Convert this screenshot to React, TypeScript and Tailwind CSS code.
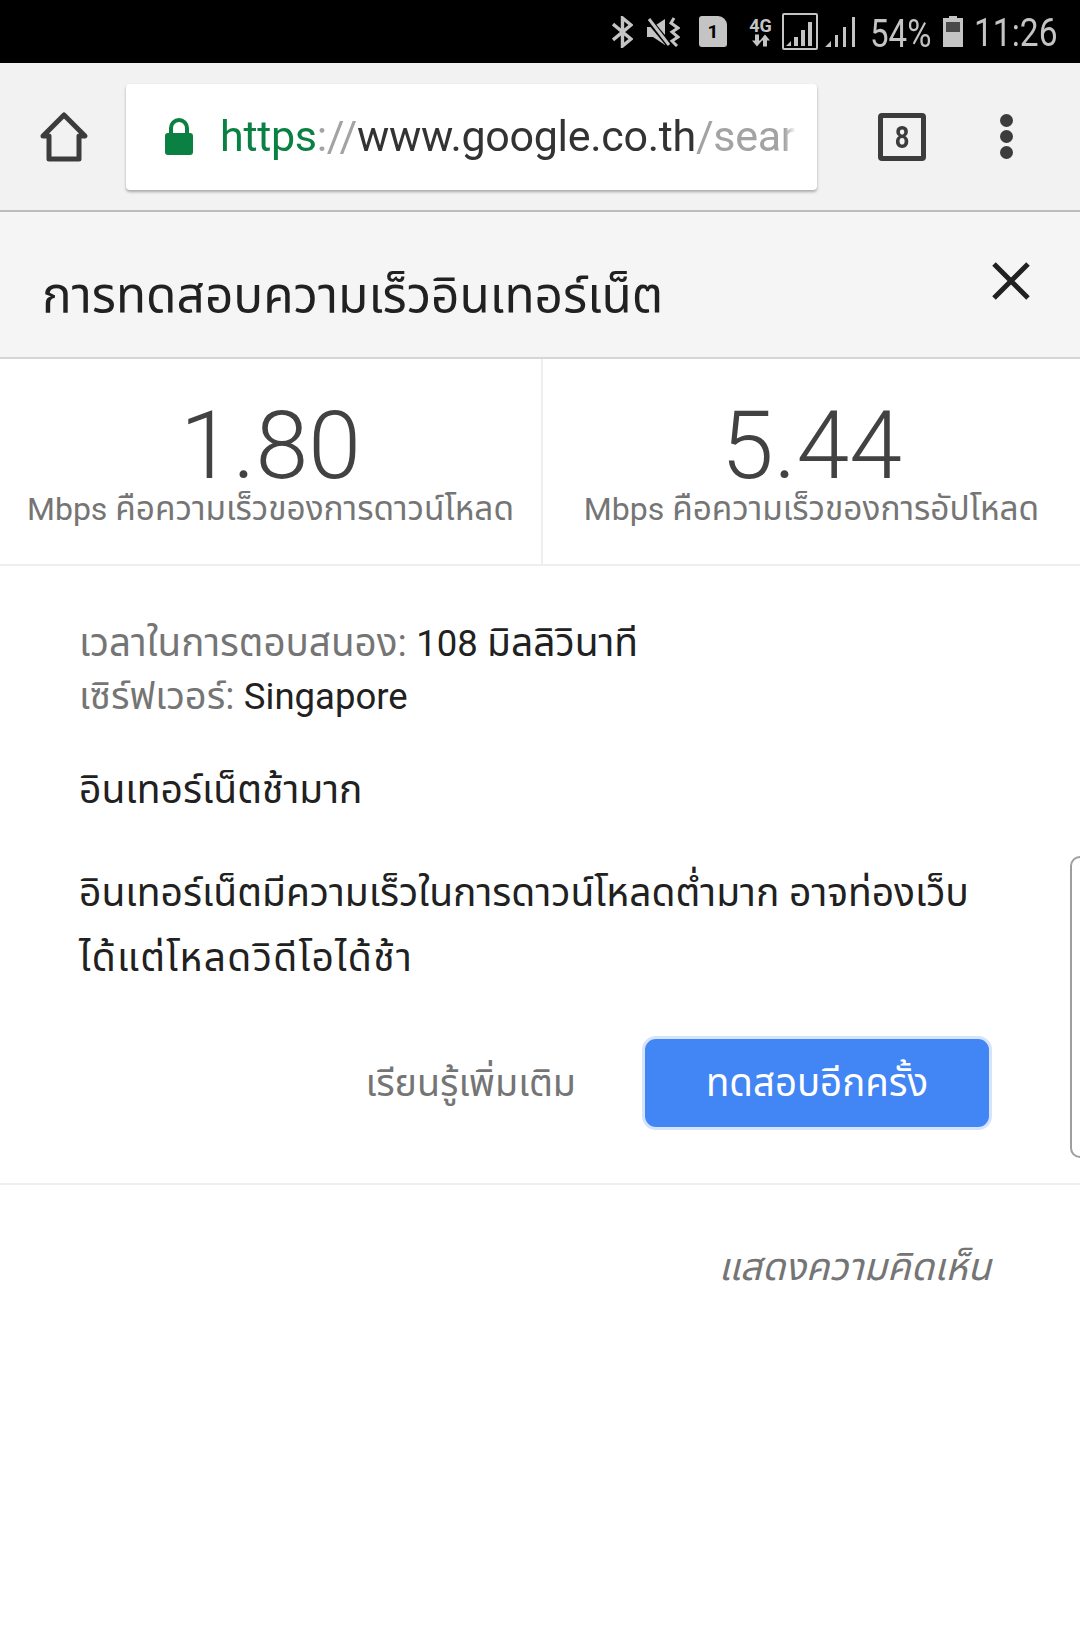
const font = "font-['Roboto','Noto_Sans','Noto_Sans_Thai',sans-serif]";
const icon = "text-[#c4c4c4]";

function StatusBar() {
  return (
    <div className={`flex h-[63px] items-center justify-end bg-black pr-[23px] ${icon}`}>
      {/* bluetooth */}
      <svg width="21" height="32" viewBox="0 0 21 32" fill="none" stroke="currentColor" strokeWidth="3.4" className="mr-[14px]">
        <path d="M1 8 L19 23 L10.5 30 V2 L19 9 L1 24" />
      </svg>
      {/* mute + vibrate */}
      <svg width="33" height="30" viewBox="0 0 33 30" fill="currentColor" className="mr-[19px]">
        <path d="M0 10 H6 L18 2 V28 L6 20 H0 Z" />
        <path d="M0 1 L24 30" stroke="#000" strokeWidth="6" />
        <path d="M2 2 L22 28" stroke="currentColor" strokeWidth="3" />
        <path d="M27 1 L24 6 L31 11 L25 15 L31 20 L25 24 L30 29" fill="none" stroke="currentColor" strokeWidth="3" />
      </svg>
      {/* sim 1 */}
      <div className="mr-[21px] flex h-[31px] w-[28px] items-center justify-center rounded-[3px] rounded-tr-[9px] bg-[#c4c4c4] text-[19px] font-bold leading-none text-black">
        1
      </div>
      {/* 4G */}
      <div className="mr-[9px] flex w-[25px] flex-col items-center text-[18px] font-bold leading-[17px]">
        <span>4G</span>
        <svg width="18" height="13" viewBox="0 0 18 12" fill="currentColor">
          <path d="M5 12 L0 6 H3 V0 H7 V6 H10 Z M13 0 L18 6 H15 V12 H11 V6 H8 Z" />
        </svg>
      </div>
      {/* signal sim 1 */}
      <div className="mr-[7px] flex h-[37px] w-[36px] items-end justify-center rounded-[2px] border-2 border-[#c4c4c4] pb-[2px]">
        <svg width="28" height="26" viewBox="0 0 28 26" fill="currentColor">
          <path d="M0 26 L5 21 V26 Z M8 17 H12 V26 H8 Z M15 10 H19 V26 H15 Z M22 2 H26 V26 H22 Z" />
        </svg>
      </div>
      <svg width="31" height="31" viewBox="0 0 31 31" fill="currentColor" className="mr-[14px]">
        <path d="M0 31 L6 25 V31 Z M10 19 H13 V31 H10 Z M18 11 H21 V31 H18 Z M27 1 H30 V31 H27 Z" />
      </svg>
      <div className={`${font} mr-[13px] mt-[4px] w-[60px] origin-left scale-x-[0.87] whitespace-nowrap text-[38px] leading-none`}>54%</div>
      {/* battery */}
      <svg width="20" height="31" viewBox="0 0 20 31" className="mr-[11px]">
        <path d="M6 0 H14 V2 H20 V31 H0 V2 H6 Z" fill="#c4c4c4" />
        <rect x="3" y="6" width="14" height="10" fill="#4a4a4a" />
      </svg>
      <div className={`${font} mt-[4px] w-[83px] origin-left scale-x-[0.86] whitespace-nowrap text-[39px] leading-none`}>11:26</div>
    </div>
  );
}

function Toolbar() {
  return (
    <div className="flex h-[149px] items-center border-b-2 border-[#bdbdbd] bg-[#f2f2f2]">
      <svg width="50" height="52" viewBox="0 0 50 52" fill="none" stroke="#3c3c3c" strokeWidth="5" strokeLinejoin="round" className="ml-[39px] mr-[37px]">
        <path d="M25 4 L46 25 H40 V48 H10 V25 H4 Z" />
      </svg>
      <div className="flex h-[106px] w-[691px] items-center overflow-hidden rounded-[4px] bg-white pl-[37px] shadow-[0_2px_3px_rgba(0,0,0,0.3)]">
        <svg width="30" height="38" viewBox="0 0 30 38" className="mr-[26px] ml-[1px] shrink-0">
          <path d="M7 16 V10 A8 8 0 0 1 23 10 V16" fill="none" stroke="#0b8043" strokeWidth="4" />
          <rect x="1" y="15" width="28" height="22" rx="3" fill="#0b8043" />
        </svg>
        <div className={`${font} mb-[2px] w-[576px] overflow-hidden whitespace-nowrap text-[43px] leading-[52px] tracking-[-0.3px] text-[#333] [mask-image:linear-gradient(to_right,#000_98%,transparent)]`}>
          <span className="text-[#0b8043]">https</span>
          <span className="text-[#a3a3a3]">://</span>
          www.google.co.th
          <span className="text-[#a3a3a3]">/search</span>
        </div>
      </div>
      <div className="ml-[61px] flex h-[48px] w-[48px] items-center justify-center rounded-[4px] border-[5px] border-[#3c3c3c] leading-none text-[#3c3c3c]">
        <span className={`${font} scale-x-[0.8] text-[32px] font-bold`}>8</span>
      </div>
      <div className="ml-[74px] flex flex-col gap-[3px]">
        <div className="h-[13px] w-[13px] rounded-full bg-[#3c3c3c]" />
        <div className="h-[13px] w-[13px] rounded-full bg-[#3c3c3c]" />
        <div className="h-[13px] w-[13px] rounded-full bg-[#3c3c3c]" />
      </div>
    </div>
  );
}

function Stat({ value, label, className }: { value: string; label: string; className: string }) {
  return (
    <div className={`flex flex-col items-center pt-[44px] ${className}`}>
      <div className="text-[95px] font-light leading-[85px] text-[#424242]">{value}</div>
      <div className="mt-[1px] whitespace-nowrap text-[32px] leading-[40px] text-[#757575]">
        Mbps <span className="text-[33.4px]">{label}</span>
      </div>
    </div>
  );
}

export default function App() {
  return (
    <div className={`${font} relative h-[1639px] w-[1080px] overflow-hidden bg-white`}>
      <StatusBar />
      <Toolbar />
      <div className="flex h-[147px] items-center justify-between border-b-2 border-[#d6d6d6] bg-[#f5f5f5] pl-[42px] pr-[50px]">
        <div className="mt-[24px] text-[49.5px] leading-none text-[#212121]">การทดสอบความเร็วอินเทอร์เน็ต</div>
        {/* close */}
        <svg width="38" height="38" viewBox="0 0 38 38" stroke="#212121" strokeWidth="5" className="mb-[8px]">
          <path d="M2 2 L36 36 M36 2 L2 36" />
        </svg>
      </div>
      <div className="flex h-[207px] border-b-2 border-[#eeeeee]">
        <Stat value="1.80" label="คือความเร็วของการดาวน์โหลด" className="w-[543px] border-r-2 border-[#eeeeee]" />
        <Stat value="5.44" label="คือความเร็วของการอัปโหลด" className="flex-1" />
      </div>
      <div className="px-[79px] pt-[50px] text-[39px] text-[#212121]">
        <div className="leading-[53px]">
          <div>
            <span className="text-[38.6px] text-[#757575]">เวลาในการตอบสนอง: </span>
            <span className="text-[36.5px]">108 </span>มิลลิวินาที
          </div>
          <div>
            <span className="text-[38px] text-[#757575]">เซิร์ฟเวอร์: </span>
            <span className="text-[36.5px]">Singapore</span>
          </div>
        </div>
        <div className="mt-[41px] leading-[53px]">อินเทอร์เน็ตช้ามาก</div>
        <div className="mt-[44px] w-[900px] leading-[64px]">
          <div>อินเทอร์เน็ตมีความเร็วในการดาวน์โหลดต่ำมาก อาจท่องเว็บ</div>
          <div className="mt-[1px] tracking-[1.3px]">ได้แต่โหลดวิดีโอได้ช้า</div>
        </div>
      </div>
      <div className="mt-[46px] flex items-center justify-end pr-[88px]">
        <span className="mr-[66px] text-[37.7px] text-[#757575]">เรียนรู้เพิ่มเติม</span>
        <div className="flex h-[94px] w-[350px] items-center justify-center rounded-[14px] border-[3px] border-[#d5e3fb] bg-[#4285f4] text-[38.4px] text-white">
          ทดสอบอีกครั้ง
        </div>
      </div>
      <div className="mt-[53px] border-b-2 border-[#eeeeee]" />
      <div className="mt-[54px] pr-[89px] text-right text-[38.2px] italic text-[#757575]">แสดงความคิดเห็น</div>
      {/* scroll handle peeking from the edge */}
      <div className="absolute left-[1070px] top-[856px] h-[302px] w-[12px] rounded-l-[10px] border-2 border-[#9e9e9e] bg-white" />
    </div>
  );
}
